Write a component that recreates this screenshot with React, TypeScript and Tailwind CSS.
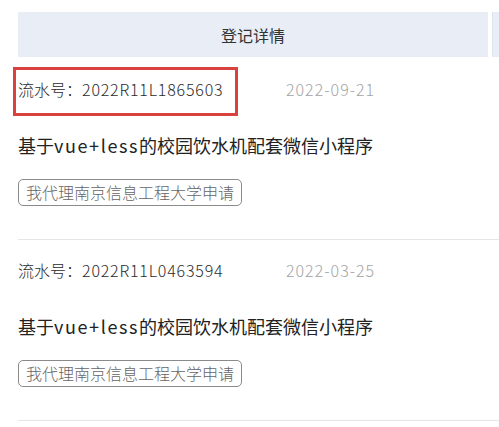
import React from "react";

const items = [
  { no: "2022R11L1865603", date: "2022-09-21", highlight: true },
  { no: "2022R11L0463594", date: "2022-03-25", highlight: false },
];

export default function App() {
  return (
    <div
      className="w-[499px] h-[427px] overflow-hidden bg-white pt-3"
      style={{ fontFamily: '"Noto Sans CJK SC", "Noto Sans", sans-serif' }}
    >
      <div className="flex gap-1 pl-[18px] mb-[2px] overflow-hidden">
        <div className="w-[470px] h-[45px] shrink-0 bg-[#e9edf5] flex items-center justify-center text-[16px] text-[#333]">
          登记详情
        </div>
        <div className="w-[470px] h-[45px] shrink-0 bg-[#e9edf5] border-l border-[#dfe3eb]" />
      </div>
      <div className="pl-[18px]">
        {items.map((it) => (
          <div key={it.no} className="pt-[18px] pb-[33px] border-b border-[#e6e6e6]">
            <div className="relative flex h-6 items-center text-[16px] leading-6 font-light">
              <span className="w-[268px] shrink-0 text-[#2b2b2b]">
                流水号：<span className="tracking-[0.8px]">{it.no}</span>
              </span>
              <span className="text-[#a3a3a3] tracking-[1px]">{it.date}</span>
              {it.highlight && (
                <div className="absolute left-[-5px] top-[-10px] w-[225px] h-[49px] border-[3px] border-[#d9423f]" />
              )}
            </div>
            <div className="mt-[31px] text-[18px] leading-[26px] text-[#222]">
              基于<span className="tracking-[1.6px]">vue+less</span>的校园饮水机配套微信小程序
            </div>
            <div className="mt-[21px] flex">
              <span className="h-[27px] px-[7px] border border-[#8a8a8a] rounded-[5px] text-[16px] leading-[25px] text-[#666] font-light">
                我代理南京信息工程大学申请
              </span>
            </div>
          </div>
        ))}
      </div>
    </div>
  );
}
